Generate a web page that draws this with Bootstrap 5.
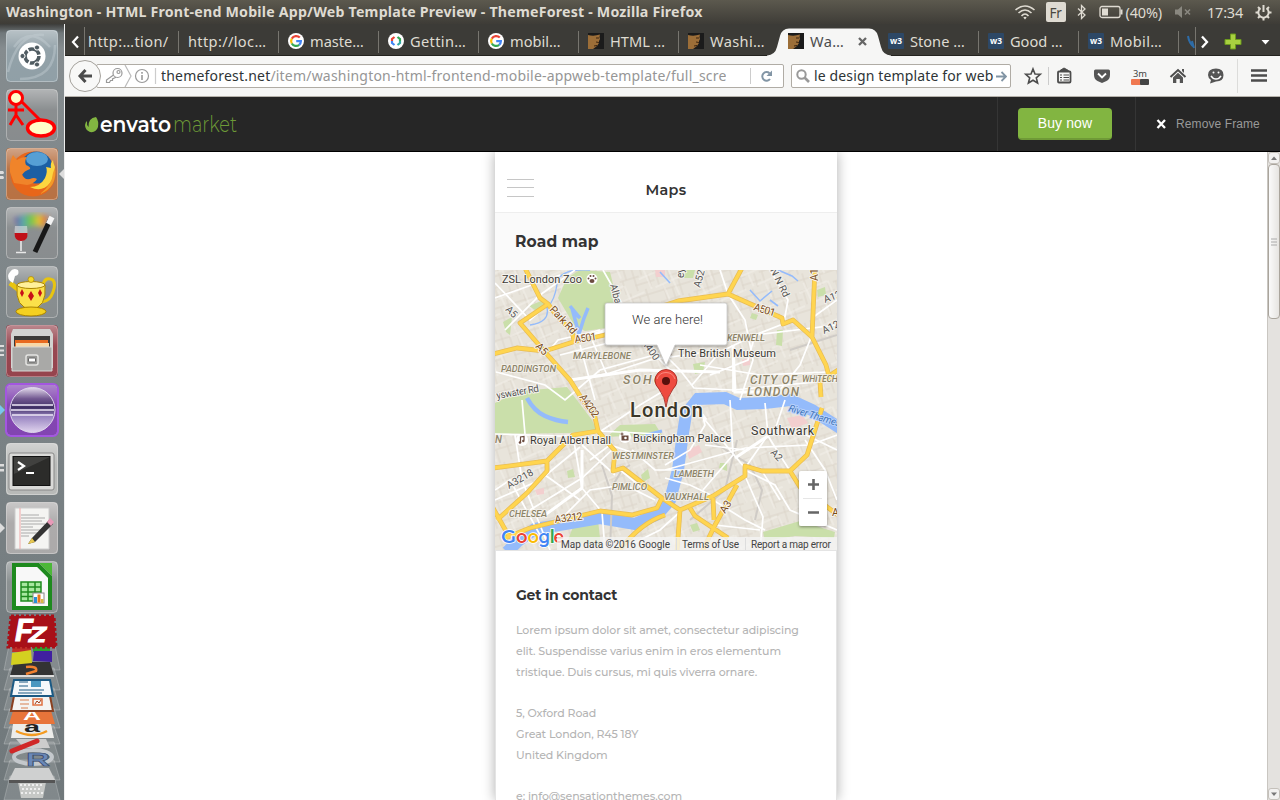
<!DOCTYPE html>
<html lang="en">
<head>
<meta charset="utf-8">
<meta name="viewport" content="width=device-width, initial-scale=1">
<title>Washington - HTML Front-end Mobile App/Web Template Preview</title>
<link href="https://cdn.jsdelivr.net/npm/bootstrap@5.3.0/dist/css/bootstrap.min.css" rel="stylesheet">
<style>
body{width:1280px;height:800px;overflow:hidden;font-family:"Noto Sans","Open Sans",sans-serif;background:#fff;line-height:1}
svg{display:block;flex:none}
.panel-top{height:24px;background:linear-gradient(#5c594e,#3e3c37);color:#dfdbd2;font-size:14px;padding-left:6px;padding-right:8px}
.win-title{font-weight:700;font-size:14.2px;letter-spacing:.2px}
.ind{font-size:14.5px;letter-spacing:-.2px}
.kbd-fr{width:20px;height:20px;background:#dfdbd2;color:#4a4840;border-radius:2px;font-size:13.5px;line-height:23px;margin:0 11px 0 10px}
.launcher{width:65px;background:linear-gradient(#3c3c3a,#70787b 9px,#858c8f 24px,#7d8588 300px,#70787b);border-right:1px solid #eee;padding-top:3px}
.fold{margin-top:-4px}
.tabs{height:32px;background:#3c3b37;border-bottom:1px solid #24231f;color:#dfdbd2;font-size:14.6px}
.tab{width:100px;height:31px;padding-left:9px;padding-top:3px;gap:6px;position:relative;white-space:nowrap}
.tab::after{content:"";position:absolute;right:0;top:7px;height:22px;width:1px;background:#77756f}
.tab.on{color:#4c4c4c}
.tab.first{width:94px;padding-left:3px}
.tab.first span{letter-spacing:.4px}
.tab.wide span{letter-spacing:.35px}
.tab.plain::after{display:none}
.tab>*{position:relative}
.tab>span{padding-top:1px}
.tab>.tab-shape{position:absolute;left:-12px;top:3px}
.navbar-ff{height:41px;background:#f6f6f5;border-bottom:1px solid #b6b2ab;position:relative}
.back{width:32px;height:32px;border:1px solid #a5a29c;border-radius:50%;background:#f8f8f7;margin-left:4px;z-index:2}
.urlbox{width:688px;height:24px;border:1px solid #b0aca5;border-radius:2px;background:#fff;margin-left:-5px;padding-left:5px;font-size:14px;color:#969696}
.url-text{width:565px;overflow:hidden;white-space:nowrap;height:20px;line-height:20px;letter-spacing:.2px;margin-left:4px}
.url-text b{font-weight:400;color:#2e3436}
.searchbox{width:220px;height:24px;border:1px solid #b0aca5;border-radius:2px;background:#fff;margin-left:7px;font-size:14px;color:#2e3436;padding:0 2px 0 4px}
.q{white-space:nowrap;letter-spacing:.14px;height:20px;line-height:20px;width:180px;overflow:hidden;margin-left:4px}
.envato{height:55px;background:#262626;border-bottom:1px solid #000;font-family:"Liberation Sans",Arial,sans-serif}
.logo{padding-left:20px;width:932px}
.buy-cell{width:139px;height:54px;border-left:1px solid #353535;border-right:1px solid #353535;padding-right:3px}
.btn-buy,.btn-buy:hover{width:94px;height:32px;background:#82b541;border:0;border-bottom:2px solid #6f9a37;border-radius:4px;color:#fff;font-size:14px;line-height:30px;padding:0;letter-spacing:.1px}
.remove{font-size:12px;color:#999;padding-left:20px;gap:9px;letter-spacing:.1px}
.stage{height:648px;background:#fff}
.phone{width:342px;margin-left:430px;box-shadow:0 0 12px rgba(0,0,0,.32);background:#fff;font-family:"Montserrat",Inter,sans-serif;clip-path:inset(0 -20px)}
.phone-head{height:60px;padding:27px 12px 0}
.burger{width:27px;height:18px;border-top:1px solid #c6c6c6;border-bottom:1px solid #c6c6c6}
.burger i{display:block;height:1px;background:#c6c6c6;margin-top:7px}
.phone-title{font-size:14.4px;font-weight:600;color:#333;letter-spacing:.3px;margin-top:4px}
.head-end{width:27px}
.road-head{height:58px;background:#fafafa;border-top:1px solid #eee;font-size:15.5px;font-weight:700;color:#333;padding-left:20px;letter-spacing:.12px}
.contact{border:1px solid #e4e4e4;border-bottom:0;height:250px;padding:35px 20px 0;color:#b4b4b4;font-size:11px;line-height:21px;font-weight:500;letter-spacing:-.1px}
.contact h2{font-size:14px;font-weight:700;color:#333;margin:0 0 16px;line-height:18px;letter-spacing:-.18px}
.contact p{margin:0 0 20px;white-space:nowrap}
.sb{width:13px;background:#e4e2df;border-left:1px solid #c9c6c1;margin-left:430px}
.sb-btn{height:12px;background:#f2f1f0;border:1px solid #c4c0ba;border-radius:3px}
.sb-thumb{height:155px;background:linear-gradient(90deg,#fafafa,#e6e4e1);border:1px solid #aaa59d;border-radius:4px}
</style>
</head>
<body class="d-flex flex-column">
<svg width="0" height="0" class="position-absolute">
<defs>
<linearGradient id="tg" x1="0" y1="0" x2="0" y2="1"><stop offset="0" stop-color="#fff" stop-opacity=".42"/><stop offset=".4" stop-color="#fff" stop-opacity=".12"/><stop offset="1" stop-color="#fff" stop-opacity=".1"/></linearGradient>
<g id="tile"><rect x="6" y="3" width="52" height="52" rx="4"/><rect x="6.5" y="3.5" width="51" height="51" rx="4" fill="url(#tg)" stroke="#fff" stroke-opacity=".35"/></g>
<symbol id="gicon" viewBox="0 0 16 16"><circle cx="8" cy="8" r="8" fill="#fff"/><g fill="none" stroke-width="2.2"><path d="M11.8 4.6A5 5 0 0 0 3.8 5.6" stroke="#ea4335"/><path d="M3.8 5.6A5 5 0 0 0 3.8 10.5" stroke="#fbbc05"/><path d="M3.8 10.5A5 5 0 0 0 11.2 11.8" stroke="#34a853"/><path d="M11.2 11.8A5 5 0 0 0 12.9 8.2H8.2" stroke="#4285f4"/></g></symbol>
<symbol id="faceicon" viewBox="0 0 16 16"><rect width="16" height="16" fill="#1b1b1b"/><path d="M0 2Q6 3.500 12 1.500L11.500 4 12 6 11 8 11 10 9 13 5 16H0Z" fill="#9c6e38"/><path d="M8 5l3 0M8 9l3 .5M6 13l3-.5" stroke="#3c2410"/></symbol>
<symbol id="w3icon" viewBox="0 0 16 16"><rect width="16" height="16" rx="1" fill="#2d4866"/><text x="8" y="11" font-size="8.500" font-weight="700" font-family="Noto Sans,sans-serif" fill="#fff" text-anchor="middle" textLength="12" lengthAdjust="spacingAndGlyphs">w3</text></symbol>
</defs></svg>

<header class="panel-top d-flex align-items-center justify-content-between">
 <div class="win-title text-nowrap">Washington - HTML Front-end Mobile App/Web Template Preview - ThemeForest - Mozilla Firefox</div>
 <div class="ind d-flex align-items-center">
  <svg width="22" height="18" viewBox="0 0 22 18" fill="none" stroke="#dfdbd2" stroke-width="1.600"><path d="M1.500 7Q11 -1 20.500 7M4.500 10Q11 4 17.500 10M7.500 13Q11 9 14.500 13"/><path d="M9.300 14.500L11 16.500 12.700 14.500Q11 13 9.300 14.500Z" fill="#dfdbd2" stroke="none"/></svg>
  <div class="kbd-fr text-center">Fr</div>
  <svg width="9" height="16" viewBox="0 0 9 16" fill="none" stroke="#dfdbd2" stroke-width="1.300"><path d="M1 4.500L8 11 4.500 14.500V1.500L8 5 1 11.500"/></svg>
  <svg style="margin:0 3px 0 13px" width="24" height="14" viewBox="0 0 24 14"><rect x="1" y="1.500" width="20" height="11" rx="2" fill="none" stroke="#dfdbd2" stroke-width="1.300"/><rect x="3" y="3.500" width="6" height="7" fill="#dfdbd2"/><path d="M22.500 4.500v5" stroke="#dfdbd2" stroke-width="2"/></svg>
  <span>(40%)</span>
  <svg style="margin:0 15px 0 12px" width="18" height="14" viewBox="0 0 18 14" fill="#8a8880"><path d="M1 4.500H4L8 1V13L4 9.500H1Z"/><path d="M11 4.500l5 5M16 4.500l-5 5" stroke="#8a8880" stroke-width="1.600"/></svg>
  <span>17:34</span>
  <svg style="margin-left:12px" width="17" height="17" viewBox="0 0 17 17" fill="none" stroke="#dfdbd2"><path d="M5.500 4.200A5.200 5.200 0 1 0 11.500 4.200" stroke-width="2"/><path d="M8.500 1V8" stroke-width="2"/><path d="M3 3l2 2M14 3l-2 2M.5 8.500H3M14 8.500h2.500M3 14l2-2M14 14l-2-2M8.500 14v2.500" stroke-width="2"/></svg>
 </div>
</header>

<div class="d-flex flex-grow-1">
<aside class="launcher flex-shrink-0">
 <svg width="64" height="59" viewBox="0 0 64 59"><use href="#tile" fill="#84959d"/><path d="M8 45Q18 5 44 8M20 52Q55 52 55 18M14 20Q30 -2 50 20" stroke="#c8d2d6" stroke-width="2.500" opacity=".4" fill="none"/><circle cx="32" cy="29" r="13.500" fill="#fff"/><circle cx="32" cy="29" r="7" fill="none" stroke="#505c62" stroke-width="3.600" stroke-dasharray="13 1.660"/><g fill="#505c62" stroke="#fff"><circle cx="22.500" cy="29" r="2.600"/><circle cx="37" cy="20.500" r="2.600"/><circle cx="37" cy="37.500" r="2.600"/></g></svg>
 <svg width="64" height="59" viewBox="0 0 64 59"><use href="#tile" fill="#7b7f81"/><g stroke="#f00" stroke-width="3" fill="none"><path d="M16 18V30M8 24H24M16 29L10 39M16 29L23 39M22 16L41 35"/><circle cx="16" cy="12" r="6.500" fill="#ffffc8"/><ellipse cx="41" cy="42" rx="13.500" ry="8" fill="#ffffc8" stroke-width="3.500"/></g></svg>
 <svg width="64" height="59" viewBox="0 0 64 59"><use href="#tile" fill="#b0622f"/><circle cx="33" cy="29" r="22.500" fill="#e8661a"/><circle cx="36.500" cy="22.500" r="16" fill="#1c5fa4"/><ellipse cx="37" cy="14" rx="11" ry="7" fill="#6ab4e6" opacity=".75"/><path d="M10 27Q9 17 13 10L17 15Q21 12 27 12 24 16 26 20 31 22 30 24 24 26 22 30 24 35 30 34 34 32 37 34 34 39 27 40L14 38Z" fill="#f0842a"/><path d="M46 22Q48 26 45 33 40 42 30 42 42 48 50 38 56 32 55 22 53 18 53 15 50 18 51 23Z" fill="#fcd640"/><path d="M55 22Q58 42 40 49 52 40 53 28Z" fill="#f29a28"/><path d="M0 26h3q2 2 0 3H0zM0 31h3q2 2 0 3H0z" fill="#ddd"/><path d="M64 24L59 29 64 34Z" fill="#ddd"/></svg>
 <svg width="64" height="59" viewBox="0 0 64 59"><defs><linearGradient id="rb"><stop stop-color="#744fa0"/><stop offset=".25" stop-color="#5aa6b0"/><stop offset=".5" stop-color="#70c848"/><stop offset=".75" stop-color="#e8c038"/><stop offset="1" stop-color="#e05038"/></linearGradient><filter id="bl"><feGaussianBlur stdDeviation="2.500"/></filter></defs><use href="#tile" fill="#7c8082"/><path d="M14 14Q30 8 48 12L44 24Q30 17 20 30Z" fill="url(#rb)" filter="url(#bl)"/><path d="M35 48L50 16" stroke="#181818" stroke-width="5"/><path d="M48.500 20L52 13" stroke="#f4f4f4" stroke-width="5.500"/><path d="M15 22Q13 37 21 37 29 37 27 22Z" fill="#e8e8e8" opacity=".55"/><path d="M14.500 29H27.500Q28 37 21 37 14.500 37 14.500 29Z" fill="#c01018"/><path d="M21 37V47M16 48.500H26" stroke="#e8e8e8" stroke-width="1.600"/></svg>
 <svg width="64" height="59" viewBox="0 0 64 59"><use href="#tile" fill="#7a8082"/><path d="M43 21Q46 13 53 17 56 21 53 29 50 38 42 39" fill="none" stroke="#e8c410" stroke-width="3"/><path d="M10 20L19 27 21 35" fill="none" stroke="#e8c410" stroke-width="5"/><path d="M17 22Q15 45 31 46 47 45 45 22Z" fill="#fbe14a" stroke="#ab8400"/><ellipse cx="31" cy="22" rx="14" ry="3.500" fill="#fff09a" stroke="#ab8400"/><circle cx="31" cy="16.500" r="3" fill="#f4d828" stroke="#ab8400" stroke-width=".7"/><ellipse cx="31" cy="48.500" rx="15" ry="4.500" fill="#f4d020" stroke="#ab8400"/><path d="M22 26l2 4-2 4-2-4zM31 28l3 5-3 5-3-5zM40 26l2 4-2 4-2-4z" fill="#c81018"/><path d="M10 18Q6 13 10 9 13 4 18 7 20 12 15 13L13 20Z" fill="#fff"/></svg>
 <svg width="64" height="59" viewBox="0 0 64 59"><use href="#tile" fill="#8a2f3a"/><path d="M13 7H50L53 12V46H11V12Z" fill="#d2d2d0"/><rect x="14" y="14" width="36" height="14" fill="#3c3a38"/><path d="M15 18H48V26H15Z" fill="#e86a20"/><path d="M16 21H49V26H16Z" fill="#f8d8a8"/><path d="M12 25H52V49H12Z" fill="#a9a9a7" stroke="#d6d6d4"/><rect x="26" y="33" width="12" height="10" rx="2" fill="#989896" stroke="#e4e4e2" stroke-width="1.500"/><rect x="28.500" y="36" width="7" height="4" rx="1" fill="#fff" stroke="#666"/><path d="M0 23h4v2H0zM0 27.500h4v2H0zM0 32h4v2H0z" fill="#ddd"/></svg>
 <svg width="64" height="59" viewBox="0 0 64 59"><use href="#tile" fill="#7430a8"/><rect x="6" y="3" width="52" height="52" rx="5" fill="none" stroke="#a356e0" stroke-width="2"/><defs><linearGradient id="ecl" x1="0" y1="0" x2="0" y2="1"><stop stop-color="#e4dcec"/><stop offset=".25" stop-color="#715790"/><stop offset=".45" stop-color="#3f2f64"/><stop offset=".65" stop-color="#9a86c2"/><stop offset="1" stop-color="#e0d4ee"/></linearGradient></defs><circle cx="32.500" cy="29" r="22.500" fill="url(#ecl)" stroke="#ded4ec"/><path d="M12 24H53M11 29H54M12 34H53" stroke="#eee8f6" stroke-width="1.600"/><path d="M0 24L5 29 0 34Z" fill="#7ac6ec"/></svg>
 <svg width="64" height="59" viewBox="0 0 64 59"><use href="#tile" fill="#b0b2b0"/><rect x="9" y="13" width="45" height="37" rx="2" fill="#dadad8" stroke="#888"/><rect x="13" y="16.500" width="37" height="29" fill="#2c2c2a" stroke="#111"/><path d="M14 17H50L14 34Z" fill="#fff" opacity=".1"/><path d="M18 22L24 26 18 30" stroke="#fff" stroke-width="2.200" fill="none"/><path d="M26 33H34" stroke="#fff" stroke-width="2"/><path d="M0 24h4v2.500H0zM0 29h4v2.500H0z" fill="#ddd"/></svg>
 <svg width="64" height="59" viewBox="0 0 64 59"><use href="#tile" fill="#a2a0a0"/><path d="M15 9H49V50H15Z" fill="#f4f4f2" stroke="#ccc"/><path d="M20 9V50" stroke="#f0a8a8"/><path d="M21 16h18M21 19h24M21 22h21M21 25h24M21 28h12M21 31h20M21 34h17M21 37h8" stroke="#aaa"/><path d="M32 39L49 21 53 25 35 43 28 45Z" fill="#333"/><path d="M32 39L28 45 35 43Z" fill="#e8c850"/><path d="M47 23L50 19 54 23 51 27Z" fill="#e89ab8"/><path d="M0 24L5 29 0 34Z" fill="#ddd"/></svg>
 <svg width="64" height="59" viewBox="0 0 64 59"><use href="#tile" fill="#7c8283"/><path d="M14 7H38L50 19V50H14Z" fill="#f8f8f8" stroke="#1e8a1e" stroke-width="4"/><path d="M39 5H52V18Z" fill="#4cb838"/><path d="M21 24H41V43H21Z" fill="#a8e8a0" stroke="#1e8a1e" stroke-width="1.500"/><path d="M21 29H41M21 34H41M21 38.500H41M28 24V43M35 24V43" stroke="#1e8a1e" stroke-width="1.500"/><rect x="33" y="35" width="11" height="10" fill="#fff" stroke="#888"/><path d="M34 39h3v6h-3z" fill="#2a90d8"/><path d="M37.500 36.500h3v8h-3z" fill="#e87818"/><path d="M41 41h2.500v4H41z" fill="#d8b848"/></svg>
 <svg class="fold position-relative" width="64" height="187" viewBox="0 613 64 187">
  <g fill="#fff" fill-opacity=".12" stroke="#fff" stroke-opacity=".22"><path d="M10 640H54L60 670H4Z"/><path d="M10 668H54L60 690H4Z"/><path d="M10 688H54L60 710H4Z"/><path d="M10 708H54L60 728H4Z"/><path d="M10 726H54L60 744H4Z"/><path d="M10 742H54L60 762H4Z"/><path d="M10 760H54L60 780H4Z"/><path d="M10 776H54L60 800H4Z"/></g>
  <path d="M18 782H46L43 798H21Z" fill="#c6c8c6"/><path d="M20 785h24M22 789h20M21 793h22" stroke="#eee" stroke-dasharray="2 2" stroke-width="2"/>
  <path d="M15 768H49L55 780V782H9V780Z" fill="#cfd0d0"/><path d="M9 780H55V783H9Z" fill="#555"/>
  <ellipse cx="33" cy="757" rx="19" ry="7" fill="none" stroke="#c4c8cc" stroke-width="4"/><text x="26" y="766" font-size="19" font-weight="700" font-family="Liberation Sans,sans-serif" fill="#6a88b8" stroke="#3a4c70" stroke-width=".6" textLength="24" lengthAdjust="spacingAndGlyphs">R</text>
  <path d="M16 739H46L50 748H24Z" fill="#ccc"/><path d="M12 751L37 741" stroke="#d02828" stroke-width="5" stroke-linecap="round"/>
  <path d="M13 724H51L54 738H11Z" fill="#ececea"/><text x="24" y="732" font-size="15" font-weight="700" font-family="Liberation Sans,sans-serif" fill="#222" textLength="16" lengthAdjust="spacingAndGlyphs">a</text><path d="M16 731Q32 739 47 731" stroke="#f39a20" stroke-width="2.500" fill="none"/>
  <path d="M13 711H51L55 724H9Z" fill="#e8743a"/><text x="23" y="720" font-size="12" font-weight="700" font-family="Liberation Sans,sans-serif" fill="#fff" textLength="18" lengthAdjust="spacingAndGlyphs">A</text>
  <path d="M14 696H50L53 711H11Z" fill="#f4f4f2" stroke="#8a4020" stroke-width="2"/><path d="M20 700h9M20 704h9M21 708h7" stroke="#d88050"/><path d="M33 699h9v6h-9z" stroke="#e07040" stroke-width="1.500" fill="none"/><path d="M35 704l2-3 2 2 2-3" stroke="#a04020" fill="none"/>
  <path d="M14 680H50L53 696H11Z" fill="#f4f8fa" stroke="#1c5a84" stroke-width="2"/><path d="M19 682h9M19 686h9M19 690h25M18 693h24" stroke="#1c5a84"/><path d="M31 681h10v6H31z" fill="#4a98c0"/>
  <path d="M14 662H50L54 676H10Z" fill="#333"/><path d="M10 676H54" stroke="#ddd" stroke-width="2"/><path d="M26 667Q38 666 36 671L26 674" stroke="#f08030" stroke-width="2.500" fill="none"/>
  <path d="M13 646H31V652H12Z" fill="#c03028"/><path d="M33 646H50V652H33Z" fill="#30a030"/><path d="M12 653L31 650 32 663 11 665Z" fill="#d4d020"/><path d="M34 651H52V662L33 661Z" fill="#4020a0"/>
  <path d="M11 616H54L56 647H8Z" fill="#a81018" stroke="#a81018" stroke-width="3" stroke-dasharray="3 2"/><g font-family="Liberation Sans,sans-serif" font-weight="700" font-style="italic" fill="#fff" stroke="#fff"><text x="15" y="641" font-size="31" textLength="18" lengthAdjust="spacingAndGlyphs">F</text><text x="29" y="642" font-size="22" textLength="17" lengthAdjust="spacingAndGlyphs">Z</text></g>
 </svg>
</aside>

<main class="flex-grow-1" style="min-width:0">
 <div class="tabs d-flex align-items-center">
  <svg width="20" height="31" viewBox="0 0 20 31"><path d="M13 12.500L8 18 13 23.500" stroke="#fff" stroke-width="2.200" fill="none"/><path d="M19.500 3V31" stroke="#77756f"/></svg>
  <div class="tab first d-flex align-items-center"><span>http:…tion/</span></div>
  <div class="tab wide d-flex align-items-center"><span>http://loc…</span></div>
  <div class="tab d-flex align-items-center"><svg width="16" height="16"><use href="#gicon"/></svg><span>maste…</span></div>
  <div class="tab wide d-flex align-items-center"><svg width="16" height="16" viewBox="0 0 16 16"><circle cx="8" cy="8" r="8" fill="#fff"/><g fill="none" stroke-width="2.200"><path d="M6.500 4L4 6V8" stroke="#ea4335"/><path d="M4 8V10L6.500 12" stroke="#4285f4"/><path d="M9.500 4L12 6V8" stroke="#34a853"/><path d="M12 8V10L9.500 12" stroke="#34a8a3"/></g></svg><span>Gettin…</span></div>
  <div class="tab d-flex align-items-center"><svg width="16" height="16"><use href="#gicon"/></svg><span>mobil…</span></div>
  <div class="tab d-flex align-items-center"><svg width="16" height="16"><use href="#faceicon"/></svg><span>HTML …</span></div>
  <div class="tab wide plain d-flex align-items-center"><svg width="16" height="16"><use href="#faceicon"/></svg><span>Washi…</span></div>
  <div class="tab wide on plain d-flex align-items-center"><svg class="tab-shape" width="124" height="29" viewBox="0 0 124 29"><path d="M0 28.500Q8 28 10 20L13 9Q15 1.500 22 1.500H102Q109 1.500 111 9L114 20Q116 28 124 28.500V29H0Z" fill="#f6f6f5"/></svg><svg width="16" height="16"><use href="#faceicon"/></svg><span>Wa…</span><svg class="ms-2" width="9" height="9" viewBox="0 0 9 9"><path d="M1 1L8 8M8 1L1 8" stroke="#666" stroke-width="2.300"/></svg></div>
  <div class="tab d-flex align-items-center"><svg width="16" height="16"><use href="#w3icon"/></svg><span>Stone …</span></div>
  <div class="tab d-flex align-items-center"><svg width="16" height="16"><use href="#w3icon"/></svg><span>Good …</span></div>
  <div class="tab wide d-flex align-items-center"><svg width="16" height="16"><use href="#w3icon"/></svg><span>Mobil…</span></div>
  <svg width="101" height="31" viewBox="1179 24 101 31"><path d="M1188 36Q1189 43 1194 47M1192 41L1194 48" stroke="#2d6ca8" stroke-width="2" fill="none"/><path d="M1195.500 27V55" stroke="#77756f"/><path d="M1202 36.500L1207 42 1202 47.500" stroke="#fff" stroke-width="2.300" fill="none"/><path d="M1230.500 34H1235.500V39.500H1241V44.500H1235.500V49H1230.500V44.500H1225V39.500H1230.500Z" fill="#a8d040" stroke="#6c9a1c"/><path d="M1261.500 40H1269.500L1265.500 44.500Z" fill="#fff"/></svg>
 </div>
 <div class="navbar-ff d-flex align-items-center">
  <div class="back d-flex align-items-center justify-content-center"><svg width="16" height="16" viewBox="0 0 16 16" fill="none" stroke="#4c4c4c" stroke-width="3"><path d="M8.500 2L3 8 8.500 14M3.500 8H15"/></svg></div>
  <div class="urlbox d-flex align-items-center">
   <svg width="55" height="22" viewBox="102 65 55 22" fill="none" stroke="#999" stroke-width="1.200"><circle cx="117.500" cy="73" r="4.500"/><circle cx="118.500" cy="72" r="1.500"/><path d="M113.500 75L106.500 80V82.500H109.500L110.500 80.500H112.500V79L116 77.300"/><path d="M125 65L131 76 125 87" stroke="#bbb"/><circle cx="142" cy="76" r="6.500"/><path d="M142 75V80M142 72V73.800" stroke-width="1.600"/><path d="M155.500 68V84" stroke="#ccc"/></svg>
   <div class="url-text"><b>themeforest.net</b>/item/washington-html-frontend-mobile-appweb-template/full_scre</div>
   <svg class="ms-4" width="30" height="22" viewBox="750 65 30 22" fill="none"><path d="M750.500 68V84" stroke="#ccc"/><path d="M769.500 73.200A4.300 4.300 0 1 0 770 79" stroke="#8295a5" stroke-width="2"/><path d="M772 70.500V76H766.500Z" fill="#8295a5"/></svg>
  </div>
  <div class="searchbox d-flex align-items-center">
   <svg width="14" height="14" viewBox="0 0 14 14" fill="none" stroke="#999" stroke-width="2"><circle cx="5.500" cy="5.500" r="4.200"/><path d="M8.500 8.500L13 13" stroke-width="2.600"/></svg>
   <div class="q">le design template for web</div>
   <svg style="margin-left:2px" width="11" height="11" viewBox="0 0 11 11" fill="none" stroke="#8295a5" stroke-width="1.800"><path d="M0 5.500H9.500M5.500 1L10 5.500 5.500 10"/></svg>
  </div>
  <svg width="269" height="36" viewBox="1011 58 269 36" fill="none" stroke="#4c4c4c"><path d="M1033 69L1035 74 1040.300 74.300 1036.300 77.800 1037.600 83 1033 80.200 1028.400 83 1029.700 77.800 1025.700 74.300 1031 74Z" stroke-width="1.600"/><path d="M1048.500 67V85" stroke="#ccc"/>
   <rect x="1058" y="71.500" width="12.500" height="11" rx="1" stroke-width="1.800"/><path d="M1060 70.500L1064 68 1068.500 70.500Z" fill="#4c4c4c"/><path d="M1060 75H1062M1063.500 75H1069M1060 77.500H1062M1063.500 77.500H1069M1060 80H1062M1063.500 80H1069" stroke-width="1.200"/>
   <path d="M1095.500 69.500H1108.500Q1110 69.500 1110 71V75Q1110 79 1106.500 81L1102 83 1097.500 81Q1094 79 1094 75V71Q1094 69.500 1095.500 69.500Z" fill="#555" stroke="none"/><path d="M1098 73.500L1102 77.500 1106 73.500" stroke="#fff" stroke-width="1.800"/>
   <text x="1133" y="77" font-size="9.500" fill="#444" stroke="none" textLength="14" lengthAdjust="spacingAndGlyphs">3m</text><rect x="1131" y="79" width="10" height="6" rx="1" fill="#f07850" stroke="none"/><rect x="1140" y="79" width="9" height="6" rx="1" fill="#444" stroke="none"/>
   <path d="M1170.500 77L1178 70 1185.500 77" stroke-width="2"/><path d="M1173 77.500L1178 72.800 1183 77.500V83H1179.800V79H1176.300V83H1173ZM1182 69h2v4l-2-2z" fill="#555" stroke="none"/>
   <path d="M1216 68.500Q1223.500 68.500 1223.500 75 1223.500 81.500 1216 81.500L1210 83.500 1211 80Q1208 78 1208 75 1208 68.500 1216 68.500Z" fill="#555" stroke="none"/><path d="M1211 75.800Q1213 79 1216 79 1219 79 1221 75.800" stroke="#fff" stroke-width="1.500"/><circle cx="1213.500" cy="72.500" r="1" fill="#fff" stroke="none"/><circle cx="1218.500" cy="72.500" r="1" fill="#fff" stroke="none"/>
   <path d="M1237.500 59V93" stroke="#dcdcda"/><path d="M1251 70.500H1267M1251 75.500H1267M1251 80.500H1267" stroke-width="2.400"/></svg>
 </div>
 <div class="envato d-flex align-items-center">
  <div class="logo"><svg width="155" height="30" viewBox="85 110 155 30"><path d="M96 118Q99 122 98 128 96 134 90 133 85 131 85 126 85.500 123 87 122 86.500 126 88.500 128 88 119 96 118Z" fill="#82b541"/><g font-family="Montserrat,sans-serif" font-size="22"><text x="100" y="133" fill="#fff" font-weight="600" textLength="71" lengthAdjust="spacingAndGlyphs">envato</text><text x="173" y="133" fill="#6d9a37" font-weight="300" textLength="64" lengthAdjust="spacingAndGlyphs">market</text></g></svg></div>
  <div class="buy-cell d-flex align-items-center justify-content-center"><button class="btn btn-buy">Buy now</button></div>
  <div class="remove d-flex align-items-center"><svg width="11" height="10" viewBox="0 0 11 10"><path d="M1.500 1L9 9M9 1L1.500 9" stroke="#fff" stroke-width="2.300"/></svg><span>Remove Frame</span></div>
 </div>
 <div class="stage d-flex">
  <section class="phone flex-shrink-0">
   <div class="phone-head d-flex justify-content-between align-items-start"><div class="burger"><i></i></div><div class="phone-title">Maps</div><div class="head-end"></div></div>
   <div class="road-head d-flex align-items-center">Road map</div>
   <svg width="342" height="280" viewBox="495 270 342 280">
    <defs><pattern id="st" width="34" height="31" patternUnits="userSpaceOnUse" patternTransform="rotate(-17)"><path d="M0 6H34M0 17H20M14 25H34M7 0V17M15 6V31M23 0V17M29 17V31M3 17V31" stroke="#dcd5ca" fill="none" stroke-width="1"/></pattern>
    <pattern id="st2" width="47" height="39" patternUnits="userSpaceOnUse" patternTransform="rotate(-24)"><path d="M0 8H30M12 22H47M8 0V22M31 8V39M20 22V39" stroke="#f3f0ea" fill="none" stroke-width="1"/></pattern>
    <filter id="sh" x="-20%" y="-20%" width="140%" height="150%"><feDropShadow dx="0" dy="1" stdDeviation="1.500" flood-opacity=".4"/></filter></defs>
    <rect x="495" y="270" width="342" height="280" fill="#e8e4db"/><rect x="495" y="270" width="342" height="280" fill="url(#st)"/><rect x="495" y="270" width="342" height="280" fill="url(#st2)"/>
    <g fill="#cadfaa"><path d="M558 298L567 278 580 270 610 272 617 300 606 328 585 331 574 325Z"/><path d="M495 403L520 391 567 387 592 420 597 430 570 433 495 434Z"/><path d="M529 306L546 299 548 307 535 310Z"/><path d="M607 437L620 425 655 424 665 440 650 438 625 436Z"/><path d="M573 527L598 520 601 547 568 540Z"/><path d="M763 532L800 521 835 532 834 538 795 536 765 541Z"/><path d="M641 475L648 469 650 478 643 482Z"/><path d="M720 463l7 0 0 8-8-3zM752 313l6 2-2 5-6-2zM777 330l6 0-1 16-6-1zM693 364l12-2-2 10-8 2zM817 290l8-3 1 8-8 2zM685 270l10 0-2 8-9 0zM503 322l9-5-2 18-4-3zM567 471l6-2 2 8-7 1zM690 525l7-2 3 7-7 2z"/></g>
    <g fill="#f3cfcf"><path d="M687 450l12-5 3 7-13 7z"/><path d="M655 270h10v7h-9zM742 360l8-2v7l-7 1zM535 490l9-2 0 6-7 1zM787 418l15-3 6 8-16 6z"/></g>
    <path d="M507 552L518 541 535 529 565 524 600 518 635 524 658 514 670 500 678 470 682 440 686 414 698 399 725 398 738 404 765 403 790 400 812 410 840 428" fill="none" stroke="#94bbfb" stroke-width="12"/>
    <g stroke="#94bbfb" fill="none"><path d="M527 398Q534 411 545 416T568 422" stroke-width="4.500"/><path d="M570 306L580 318 573 312 579 334 584 318 588 308" stroke-width="3.500"/><path d="M530 325Q550 322 547 308 555 300 557 284T590 270" stroke-width="1.300"/><path d="M638 440L650 434 662 431" stroke-width="3"/><path d="M750 290L760 301 772 291M660 272L670 283M778 270l14 6 6 5M495 354l10-3M770 300l8 6" stroke-width="1.600"/></g>
    <g stroke="#cfcbc6" fill="none" stroke-width="2"><path d="M602 465L612 496 610 550M610 490L622 470 630 465"/><path d="M755 520L762 490 750 465 710 440M837 335L790 350M737 440L725 490 690 520"/></g>
    <g stroke="#fff" fill="none" stroke-width="1.700"><path d="M495 283L530 320 548 304M495 298L512 292 560 275M505 330L540 295 575 270M496 372L545 385 565 400 600 370 665 352M570 380L610 373 650 360 720 350M580 345L595 400M590 335L607 375M603 270L620 300 640 340 670 370M548 352L558 340 600 330M560 355L600 345 640 335M495 434L560 436 598 433M515 435L522 480 550 550M573 436L582 488 602 512 605 550M495 500L540 480 580 447M530 510L582 478 612 450M560 520L590 490 625 485 655 500M582 445L615 475M598 433L640 405 665 390M598 431L660 434M590 460L610 445 640 455M545 475L580 500M495 490L510 480 540 535M522 400L525 434M660 350L680 370 694 388 733 390 837 380M733 345V392M692 385L720 352 755 335 837 325M728 294L745 320 753 360 740 400M770 270L788 300 784 322M812 335L800 365 780 390M828 372L760 375 700 365M783 324L755 335 748 360 710 375M665 330L675 318 678 300M837 300L812 318M720 270L728 294M682 330L665 355M700 405L705 425 690 450 665 465M705 420L745 468 768 435 800 432 837 450M665 470L745 448 810 445 837 435M730 400L733 455 703 490M705 445L745 450M765 403L768 435M785 400L775 430 755 445M745 476L763 517 760 550M745 470L775 485 790 510 837 530M762 471L780 500M713 496L690 485 665 478M713 500L745 520 765 530M805 440L825 470 837 500M768 436L790 471M680 512L660 530 630 545M620 470L645 490M632 450L655 470 690 470M715 525L760 530"/></g>
    <g stroke="#fff" fill="none" stroke-width="3"><path d="M545 352L620 325M570 380L640 370 720 372M733 345L735 392 783 392M768 436L735 458M706 420L695 405M582 488L545 515M582 450L582 488"/></g>
    <g fill="none" stroke-linejoin="round"><path id="major" d="M525 268L540 298 548 304 520 323 545 352 570 380 587 407 594 413 598 431 615 451 613 471 623 468 662 498M548 304L560 320 572 330 574 341M493 354L517 348 545 351 573 342 605 335 650 310 678 301 728 294 742 268M728 294L782 318 783 324 793 320 812 337 826 365 830 380M815 268L812 337M821 397L820 382 838 370M493 468L547 461 573 435 598 431M547 461L547 471 527 493 497 520M493 508L510 538M530 528L600 511 632 515 657 508 662 498 680 510 713 496 745 476 745 466 762 471 790 471 807 455 822 408M790 471L800 487 838 515M665 515Q640 523 618 552M737 485L715 525 702 552M680 510L677 552M690 508L695 516 728 538M713 498L714 520M530 528L505 538" stroke="#e9bd54" stroke-width="4.800"/><path d="M525 268L540 298 548 304 520 323 545 352 570 380 587 407 594 413 598 431 615 451 613 471 623 468 662 498M548 304L560 320 572 330 574 341M493 354L517 348 545 351 573 342 605 335 650 310 678 301 728 294 742 268M728 294L782 318 783 324 793 320 812 337 826 365 830 380M815 268L812 337M821 397L820 382 838 370M493 468L547 461 573 435 598 431M547 461L547 471 527 493 497 520M493 508L510 538M530 528L600 511 632 515 657 508 662 498 680 510 713 496 745 476 745 466 762 471 790 471 807 455 822 408M790 471L800 487 838 515M665 515Q640 523 618 552M737 485L715 525 702 552M680 510L677 552M690 508L695 516 728 538M713 498L714 520M530 528L505 538" stroke="#ffd54f" stroke-width="3.300"/></g>
    <g font-family="Roboto,sans-serif" paint-order="stroke" stroke="#f5f3ee" stroke-width="2" stroke-linejoin="round" font-size="10">
     <g fill="#8d8468" font-style="italic" font-weight="500" stroke-opacity=".8"><text x="573" y="359" font-size="9.500" textLength="58">MARYLEBONE</text><text x="501" y="372" font-size="9.500" textLength="55">PADDINGTON</text><text x="623" y="384" font-size="12.500" textLength="39">SOHO</text><text x="727" y="341" font-size="9.500" textLength="38">KENWELL</text><text x="802" y="382" font-size="9" textLength="36">WHITECH</text><text x="750" y="384" font-size="12" textLength="47">CITY OF</text><text x="747" y="396" font-size="12" textLength="52">LONDON</text><text x="612" y="459" font-size="9.500" textLength="62">WESTMINSTER</text><text x="612" y="490" font-size="9.500" textLength="35">PIMLICO</text><text x="509" y="517" font-size="9.500" textLength="38">CHELSEA</text><text x="674" y="477" font-size="9.500" textLength="40">LAMBETH</text><text x="664" y="500" font-size="9.500" textLength="45">VAUXHALL</text><text x="495" y="443">N</text></g>
     <g fill="#7a4b18" font-size="10.500"><text transform="translate(549 310) rotate(47)" textLength="34">Park Rd</text><text transform="translate(575 343) rotate(-8)" textLength="22">A501</text><text transform="translate(535 347) rotate(45)">A5</text><text transform="translate(579 397) rotate(55)" textLength="26">A4202</text><text transform="translate(753 310) rotate(17)" textLength="22">A501</text><text transform="translate(555 523) rotate(-7)" textLength="28">A3212</text><text transform="translate(725 514) rotate(-57)">A3</text><text transform="translate(818 281) rotate(-90)">A10</text><text x="832" y="516">A3</text></g>
     <g fill="#555" font-size="10"><text transform="translate(505 310) rotate(45)">A5</text><text transform="translate(497 399) rotate(-10)" textLength="43">yswater Rd</text><text transform="translate(610 285) rotate(75)">Albany</text><text transform="translate(641 342) rotate(55)">A400</text><text transform="translate(700 288) rotate(-75)">A520</text><text transform="translate(684 278) rotate(-90)">ey</text><text transform="translate(770 270) rotate(64)">N N Rd</text><text transform="translate(825 303) rotate(-20)">A12</text><text transform="translate(824 334) rotate(-25)">A120</text><text transform="translate(509 489) rotate(-30)">A3218</text><text transform="translate(770 453) rotate(47)">A2</text><text transform="translate(788 411) rotate(17)" fill="#4174b8" stroke="#b8d2fc" font-style="italic" textLength="54">River Thames</text></g>
     <g fill="#3d3a35" font-size="11"><text x="502" y="283" textLength="80">ZSL London Zoo</text><text x="678" y="357" textLength="98">The British Museum</text><text x="530" y="444" textLength="81">Royal Albert Hall</text><text x="633" y="442" textLength="98">Buckingham Palace</text><text x="751" y="435" font-size="12.500" textLength="63">Southwark</text></g>
     <text x="630" y="417" font-size="20" font-weight="500" fill="#3a3628" stroke-width="2.500" textLength="73">London</text>
    </g>
    <circle cx="592" cy="279" r="5.500" fill="#fff"/><g fill="#6c4c40"><ellipse cx="592" cy="281" rx="2.500" ry="2"/><circle cx="588.500" cy="278.500" r="1"/><circle cx="590.500" cy="276" r="1"/><circle cx="593.500" cy="276" r="1"/><circle cx="595.500" cy="278.500" r="1"/></g>
    <circle cx="522" cy="440" r="6" fill="#fff"/><path d="M520.500 442.500V437L524 436.500V440.500" stroke="#6c4c40" stroke-width="1.200" fill="none"/><circle cx="520" cy="442.500" r="1.300" fill="#6c4c40"/><circle cx="523.300" cy="441" r="1.200" fill="#6c4c40"/>
    <circle cx="625" cy="437" r="6" fill="#fff"/><rect x="621.500" y="435.500" width="7" height="5" fill="#6c4c40"/><circle cx="625.500" cy="438" r="1.300" fill="#fff"/><path d="M620.500 434h3M622 432.500v3" stroke="#6c4c40"/>
    <path d="M670 349v7M668 351h4M668 354h4" stroke="#6c4c40"/>
    <path filter="url(#sh)" d="M607 303H725Q727 303 727 305V343Q727 345 725 345H675L666 366 657 345H607Q605 345 605 343V305Q605 303 607 303Z" fill="#fff" stroke="#bbb" stroke-width=".6"/>
    <text x="632" y="324" font-family="Roboto,sans-serif" font-size="13" font-weight="300" fill="#333" textLength="71">We are here!</text>
    <path d="M666 407Q665 397 659 389 655 385 655 380.500A11 11 0 0 1 677 380.500Q677 385 673 389 667 397 666 407Z" fill="#ee4b40" stroke="#9c2018" stroke-width=".8"/><path d="M657 379A9.500 9.500 0 0 1 675 379" fill="none" stroke="#fb8a80"/><circle cx="666" cy="381" r="4" fill="#58100c"/>
    <g font-family="Montserrat,sans-serif" font-size="19" font-weight="600" stroke="#fff" stroke-width="1.500" paint-order="stroke"><text x="501" y="543" fill="#4285f4" textLength="15" lengthAdjust="spacingAndGlyphs">G</text><text x="516" y="543" fill="#ea4335" textLength="11.500" lengthAdjust="spacingAndGlyphs">o</text><text x="527.500" y="543" fill="#fbbc05" textLength="11.500" lengthAdjust="spacingAndGlyphs">o</text><text x="538.500" y="543" fill="#4285f4" textLength="11.500" lengthAdjust="spacingAndGlyphs">g</text><text x="549.500" y="543" fill="#34a853">l</text><text x="553.500" y="543" fill="#ea4335" textLength="10.500" lengthAdjust="spacingAndGlyphs">e</text></g>
    <rect x="557" y="537" width="280" height="13" fill="#f5f5f5" fill-opacity=".78"/>
    <g font-family="Roboto,sans-serif" font-size="10" fill="#444"><text x="561" y="548" textLength="109">Map data ©2016 Google</text><text x="682" y="548" textLength="57">Terms of Use</text><text x="751" y="548" textLength="80">Report a map error</text></g><path d="M676.500 538V550M745.500 538V550" stroke="#ddd"/>
    <rect x="799" y="471" width="28" height="55" rx="2" fill="#fff" filter="url(#sh)"/><path d="M803 498.500H822" stroke="#e6e6e6"/><path d="M808 484.500H819M813.500 479V490M808 512.500H819" stroke="#666" stroke-width="2.600"/>
   </svg>
   <div class="contact">
    <h2>Get in contact</h2>
    <p>Lorem ipsum dolor sit amet, consectetur adipiscing<br>elit. Suspendisse varius enim in eros elementum<br>tristique. Duis cursus, mi quis viverra ornare.</p>
    <p>5, Oxford Road<br>Great London, R45 18Y<br>United Kingdom</p>
    <p>e: info@sensationthemes.com</p>
   </div>
  </section>
  <div class="sb d-flex flex-column flex-shrink-0">
   <div class="sb-btn"><svg width="10" height="10" viewBox="0 0 10 10"><path d="M2 7L5 3.500 8 7Z" fill="#777"/></svg></div>
   <div class="sb-thumb d-flex align-items-center justify-content-center"><svg width="6" height="8" viewBox="0 0 6 8"><path d="M0 1H6M0 4H6M0 7H6" stroke="#aaa"/></svg></div>
   <div class="sb-btn mt-auto"><svg width="10" height="10" viewBox="0 0 10 10"><path d="M2 3.500L5 7 8 3.500Z" fill="#777"/></svg></div>
  </div>
 </div>
</main>
</div>
<script src="https://cdn.jsdelivr.net/npm/bootstrap@5.3.0/dist/js/bootstrap.bundle.min.js"></script>
</body>
</html>
